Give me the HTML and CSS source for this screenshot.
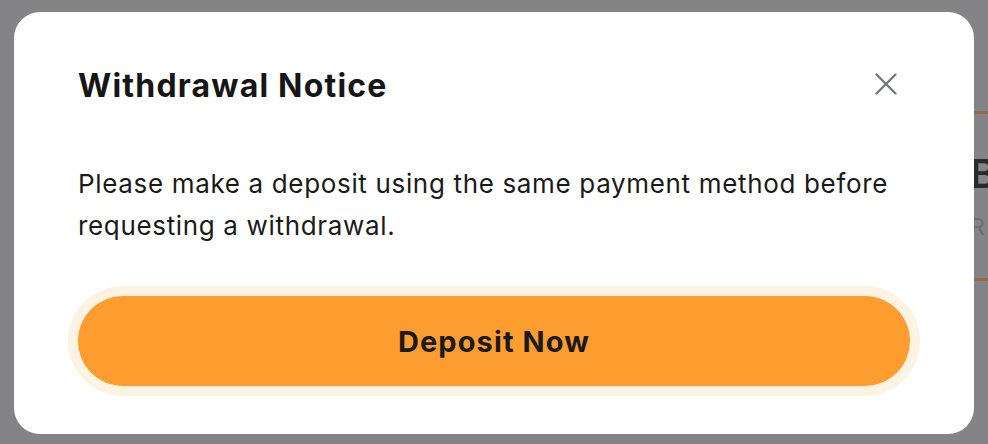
FILE: index.html
```html
<!DOCTYPE html>
<html lang="en">
<head>
<meta charset="utf-8">
<title>Withdrawal Notice</title>
<link rel="stylesheet" href="styles.css">
</head>
<body>
<div class="page">
  <div class="behind">
    <div class="behind-card">
      <div class="behind-big">B</div>
      <div class="behind-small">R</div>
    </div>
  </div>
</div>
<div class="overlay">
  <div class="modal" role="dialog" aria-labelledby="modal-title">
    <div class="modal-head">
      <h2 class="modal-title" id="modal-title">Withdrawal Notice</h2>
      <button class="close" aria-label="Close">
        <svg width="22" height="22" viewBox="0 0 22 22" fill="none" stroke="currentColor" stroke-width="2.3" stroke-linecap="round"><path d="M1.5 1.5L20.5 20.5M20.5 1.5L1.5 20.5"/></svg>
      </button>
    </div>
    <p class="modal-text">Please make a deposit using the same payment method before requesting a withdrawal.</p>
    <div class="btn-ring">
      <button class="btn">Deposit Now</button>
    </div>
  </div>
</div>
</body>
</html>
```
FILE: styles.css
```css
* { box-sizing: border-box; }
html, body { margin: 0; padding: 0; }
body {
  width: 988px;
  height: 444px;
  overflow: hidden;
  background: #848486;
  font-family: Inter, "Noto Sans", "Liberation Sans", sans-serif;
  position: relative;
}
.page {
  height: 100%;
  display: flex;
  justify-content: flex-end;
}
.behind {
  width: 40px;
  padding-top: 111px;
}
.behind-card {
  border-top: 3px solid #9a6a42;
  border-bottom: 3px solid #9a6a42;
  height: 170px;
  padding-left: 22px;
  padding-top: 38px;
}
.behind-big {
  font-size: 40px;
  font-weight: 600;
  color: #2a2a2c;
  line-height: 44px;
}
.behind-small {
  font-size: 23px;
  color: #6e6e70;
  line-height: 30px;
  margin-top: 16px;
}
.overlay {
  position: absolute;
  inset: 0;
  padding: 12px 14px 10px 14px;
}
.modal {
  width: 960px;
  height: 422px;
  background: #ffffff;
  border-radius: 26px;
  padding: 44px 64px 0 64px;
}
.modal-head {
  display: flex;
  align-items: center;
  justify-content: space-between;
  height: 56px;
}
.modal-title {
  margin: 0;
  padding-top: 4px;
  font-size: 32px;
  line-height: 38px;
  font-weight: 700;
  color: #161616;
  letter-spacing: 1.2px;
}
.close {
  border: 0;
  background: none;
  padding: 0;
  margin-right: 13px;
  color: #72757c;
  display: flex;
}
.modal-text {
  margin: 51px 0 0 0;
  font-size: 26px;
  line-height: 42px;
  letter-spacing: 0.66px;
  color: #1a1a1a;
}
.btn-ring {
  margin: 39px -10px 0 -10px;
  padding: 10px;
  border-radius: 60px;
  background: #fdf3e3;
}
.btn {
  display: block;
  width: 100%;
  height: 90px;
  border: 0;
  border-radius: 45px;
  background: #fe9d2f;
  color: #1a1a1a;
  font-family: inherit;
  font-size: 29px;
  font-weight: 700;
  letter-spacing: 1.1px;
}
```
